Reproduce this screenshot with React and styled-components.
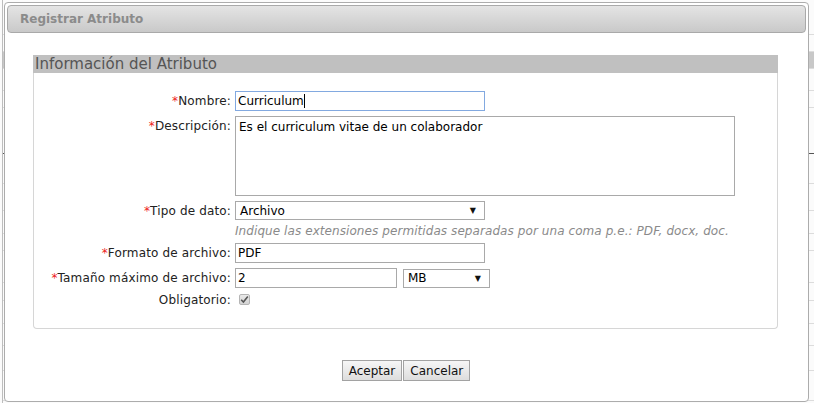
import React from "react";
import styled, { createGlobalStyle } from "styled-components";

const GlobalStyle = createGlobalStyle`
  html, body {
    margin: 0;
    padding: 0;
    background: #ffffff;
    font-family: "DejaVu Sans", Verdana, sans-serif;
  }
`;

const Page = styled.div`
  position: relative;
  width: 814px;
  height: 403px;
  overflow: hidden;
  background: #fbfbfb;
`;

// the list page that sits behind the modal
const Backdrop = styled.div`
  display: flex;
  flex-direction: column;
  border-left: 1px solid #bdbdbd;
  margin-left: 2px;
  height: 100%;
`;

const BgRow = styled.div`
  height: ${(p) => p.h}px;
  border-bottom: 1px solid ${(p) => (p.dark ? "#555" : "#dcdcdc")};
  background: ${(p) => (p.shade ? "#c8c8c8" : "transparent")};
  box-sizing: border-box;
`;

const Dialog = styled.div`
  position: absolute;
  left: 4px;
  top: 2px;
  width: 805px;
  height: 400px;
  box-sizing: border-box;
  border: 1px solid #acacac;
  border-radius: 4px;
  background: #ffffff;
  padding: 2px;
  display: flex;
  flex-direction: column;
`;

const TitleBar = styled.div`
  height: 28px;
  box-sizing: border-box;
  border: 1px solid #a9a9a9;
  border-radius: 4px;
  background: linear-gradient(#e4e4e4, #c9c9c9);
  padding: 0 12px;
  display: flex;
  align-items: center;
  font-size: 12px;
  font-weight: bold;
  color: #8b8b8b;
`;

const Body = styled.div`
  padding: 22px 28px 0 26px;
`;

const Fieldset = styled.div`
  height: 274px;
  box-sizing: border-box;
  border: 1px solid #d6d6d6;
  border-top: none;
  border-radius: 0 0 4px 4px;
`;

const Legend = styled.div`
  height: 18px;
  line-height: 19px;
  margin: 0 -1px;
  padding-left: 2px;
  background: #c0c0c0;
  font-size: 15px;
  color: #555555;
`;

const FormGrid = styled.div`
  display: grid;
  grid-template-columns: 197px 1fr;
  column-gap: 4px;
  row-gap: 5px;
  padding-top: 18px;
  font-size: 12px;
  color: #222222;
`;

const Label = styled.div`
  text-align: right;
  align-self: ${(p) => (p.top ? "start" : "center")};
  padding-top: ${(p) => (p.top ? "3px" : "0")};
  white-space: nowrap;
  letter-spacing: 0.15px;
`;

const Req = styled.span`
  color: #ee2222;
`;

const Field = styled.div`
  width: ${(p) => p.w}px;
  height: ${(p) => p.h || 20}px;
  box-sizing: border-box;
  border: 1px solid ${(p) => (p.focus ? "#82a9e0" : "#a9a9a9")};
  background: #ffffff;
  padding: ${(p) => (p.area ? "3px 3px" : "0 2px")};
  display: flex;
  align-items: ${(p) => (p.area ? "flex-start" : "center")};
  color: #000000;
  font-size: 12px;
`;

const Caret = styled.span`
  display: inline-block;
  width: 1px;
  height: 14px;
  background: #000000;
`;

const Select = styled.div`
  width: ${(p) => p.w}px;
  height: 19px;
  box-sizing: border-box;
  border: 1px solid #a9a9a9;
  background: #ffffff;
  padding: 0 8px 0 4px;
  display: flex;
  align-items: center;
  justify-content: space-between;
  color: #000000;
  font-size: 12px;
`;

const Arrow = styled.span`
  font-size: 8px;
  color: #111111;
`;

const Hint = styled.div`
  grid-column: 2;
  font-style: italic;
  color: #8a8a8a;
  line-height: 14px;
  margin-top: -1px;
  white-space: nowrap;
  letter-spacing: 0.075px;
`;

const Inline = styled.div`
  display: flex;
  gap: 6px;
  align-items: center;
`;

const Check = styled.span`
  width: 11px;
  height: 11px;
  box-sizing: border-box;
  margin: 1px 0 0 4px;
  border: 1px solid #b5b5b5;
  border-radius: 2px;
  background: linear-gradient(#e9e9e9, #d4d4d4);
  display: flex;
  align-items: center;
  justify-content: center;
`;

const Footer = styled.div`
  display: flex;
  justify-content: center;
  gap: 1px;
  padding-top: 31px;
  padding-left: 1px;
`;

const Button = styled.button`
  height: 21px;
  padding: 0 6px;
  border: 1px solid #a2a2a2;
  border-radius: 0;
  background: linear-gradient(#f6f6f6, #dddddd);
  font-family: "DejaVu Sans", Verdana, sans-serif;
  font-size: 12px;
  color: #111111;
`;

const bgRows = [
  { h: 35 }, { h: 17 }, { h: 17, shade: true }, { h: 22 }, { h: 17 },
  { h: 46, dark: true }, { h: 30 }, { h: 27 }, { h: 23 }, { h: 17 },
  { h: 32 }, { h: 18 }, { h: 23 }, { h: 22 }, { h: 25 }, { h: 30 },
];

export default function App() {
  return (
    <Page>
      <GlobalStyle />
      <Backdrop>
        {bgRows.map((r, i) => (
          <BgRow key={i} h={r.h} dark={r.dark} shade={r.shade} />
        ))}
      </Backdrop>

      <Dialog>
        <TitleBar>Registrar Atributo</TitleBar>
        <Body>
          <Fieldset>
            <Legend>Información del Atributo</Legend>
            <FormGrid>
              <Label><Req>*</Req>Nombre:</Label>
              <Field w={250} focus>
                Curriculum<Caret />
              </Field>

              <Label top><Req>*</Req>Descripción:</Label>
              <Field w={500} h={80} area>
                Es el curriculum vitae de un colaborador
              </Field>

              <Label><Req>*</Req>Tipo de dato:</Label>
              <Select w={250}>
                Archivo<Arrow>▼</Arrow>
              </Select>

              <Hint>
                Indique las extensiones permitidas separadas por una coma p.e.: PDF, docx, doc.
              </Hint>

              <Label><Req>*</Req>Formato de archivo:</Label>
              <Field w={250}>PDF</Field>

              <Label><Req>*</Req>Tamaño máximo de archivo:</Label>
              <Inline>
                <Field w={162}>2</Field>
                <Select w={87}>
                  MB<Arrow>▼</Arrow>
                </Select>
              </Inline>

              <Label>Obligatorio:</Label>
              <Check>
                <svg width="9" height="9" viewBox="0 0 9 9">
                  <path d="M1.2 4.8 L3.4 7 L7.8 1.6" fill="none" stroke="#555" strokeWidth="1.6" />
                </svg>
              </Check>
            </FormGrid>
          </Fieldset>
          <Footer>
            <Button>Aceptar</Button>
            <Button>Cancelar</Button>
          </Footer>
        </Body>
      </Dialog>
    </Page>
  );
}
